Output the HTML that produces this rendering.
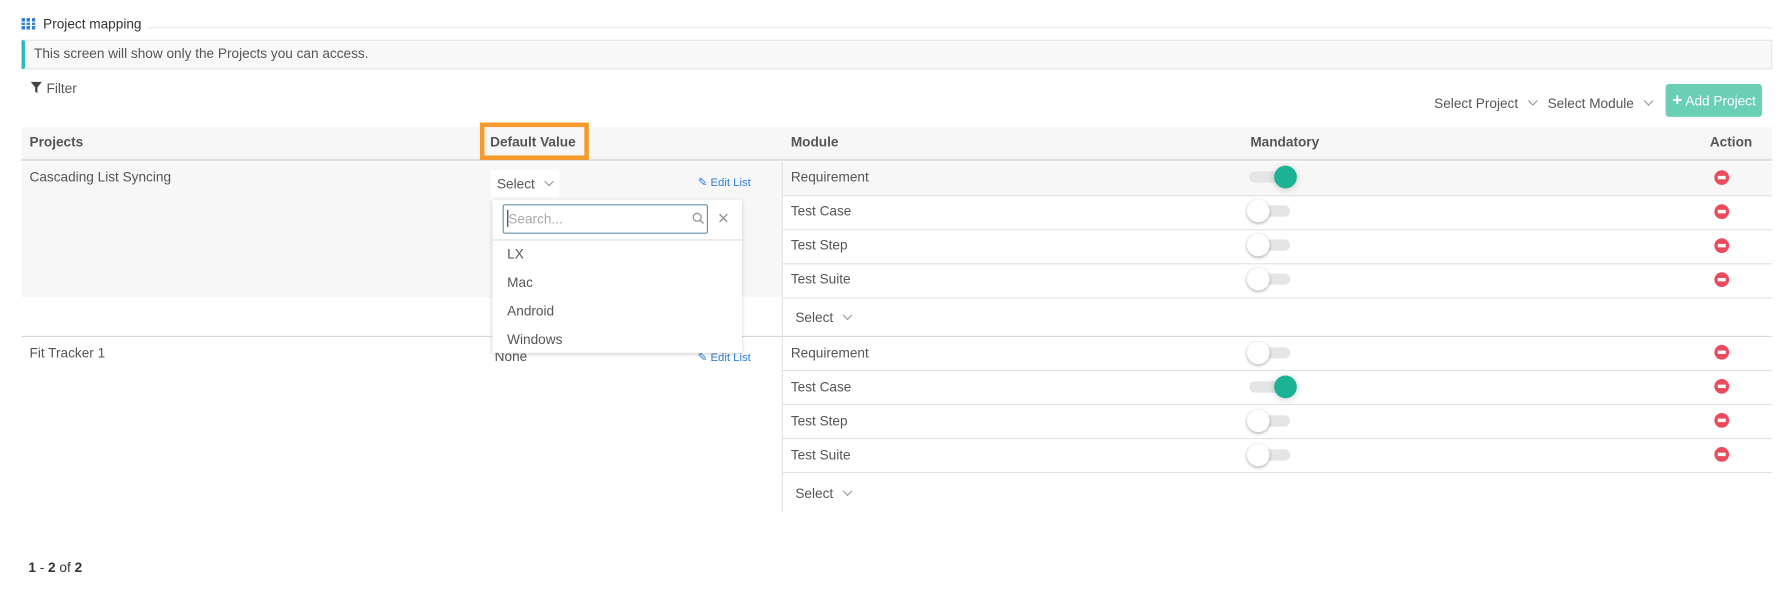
<!DOCTYPE html>
<html><head><style>
*{box-sizing:border-box;margin:0;padding:0}
html,body{width:1779px;height:602px;overflow:hidden;background:#fff}
#w{position:absolute;left:0;top:0;width:1568px;height:531px;transform:scale(1.1346);transform-origin:0 0;font-family:"Liberation Sans",sans-serif;font-size:12px;color:#555}
.a{position:absolute}
.hd{font-weight:bold;color:#555;font-size:12px}
.tog{position:absolute;width:36px;height:10px;border-radius:5px;background:#e4e5e7}
.knob{position:absolute;width:20px;height:20px;border-radius:50%;top:-5px}
.off .knob{left:-2px;background:#fff;box-shadow:0 1px 3px rgba(0,0,0,.35)}
.on .knob{left:22px;background:#1bb394;box-shadow:0 1px 6px rgba(0,0,0,.2)}
.del{position:absolute;width:13px;height:13px;border-radius:50%;background:#ea4c5d}
.del:after{content:"";position:absolute;left:3px;top:5px;width:7px;height:3px;background:#fff}
.hl{position:absolute;height:1px;background:#e2e2e2}
.chev{display:inline-block;width:6px;height:6px;border-right:1px solid #999;border-bottom:1px solid #999;transform:rotate(45deg);margin-left:10px;position:relative;top:-3px}
</style></head><body><div id="w">
<div class="a" style="left:19px;top:16px;width:12px;height:10px;background:
linear-gradient(90deg,#2a7fd4 3px,transparent 3px,transparent 4.5px,#2a7fd4 4.5px,#2a7fd4 7.5px,transparent 7.5px,transparent 9px,#2a7fd4 9px);"></div>
<div class="a" style="left:19px;top:18.5px;width:12px;height:1.2px;background:#fff"></div>
<div class="a" style="left:19px;top:21.8px;width:12px;height:1.2px;background:#fff"></div>
<div class="a" style="left:38px;top:14px;color:#333;font-size:12px">Project mapping</div>
<div class="hl" style="left:130px;top:24px;width:1432px;background:#e8e8e8"></div>
<div class="a" style="left:19px;top:35px;width:1543px;height:26px;background:#f8f8f8;border:1px solid #e6e6e6;border-left:3px solid #2bb8c4"></div>
<div class="a" style="left:30px;top:40px;color:#555">This screen will show only the Projects you can access.</div>
<svg class="a" style="left:27px;top:72px" width="10" height="10" viewBox="0 0 10 10"><path d="M0 0H10L6 5V10L4 9V5Z" fill="#444"/></svg>
<div class="a" style="left:41px;top:71px">Filter</div>
<div class="a" style="left:1264px;top:84px">Select Project<span class="chev"></span></div>
<div class="a" style="left:1364px;top:84px">Select Module<span class="chev"></span></div>
<div class="a" style="left:1468px;top:74px;width:85px;height:29px;background:#6acfb5;border-radius:3px;color:#fff;font-size:12px;line-height:29px;padding-left:6px"><b style="font-size:15px">+</b> Add Project</div>
<div class="a" style="left:19px;top:112px;width:1543px;height:30px;background:#f7f7f7;border-bottom:2px solid #e0e0e0"></div>
<div class="a hd" style="left:26px;top:118px">Projects</div>
<div class="a" style="left:423px;top:108px;width:96px;height:33px;border:4px solid #f59a2c"></div>
<div class="a hd" style="left:432px;top:118px">Default Value</div>
<div class="a hd" style="left:697px;top:118px">Module</div>
<div class="a hd" style="left:1102px;top:118px">Mandatory</div>
<div class="a hd" style="left:1507px;top:118px">Action</div>
<div class="a" style="left:19px;top:143px;width:670px;height:119px;background:#f7f7f7"></div>
<div class="a" style="left:690px;top:143px;width:872px;height:29px;background:#f7f7f7"></div>
<div class="a" style="left:689px;top:143px;width:1px;height:308px;background:#e2e2e2"></div>
<div class="a" style="left:26px;top:149px">Cascading List Syncing</div>
<div class="a" style="left:433px;top:150px;width:60px;height:24px;background:#fff"></div>
<div class="a" style="left:438px;top:155px">Select<span class="chev"></span></div>
<div class="a" style="left:615px;top:156px;color:#2a7fd4;font-size:10px">✎ Edit List</div>
<div class="hl" style="left:690px;top:172px;width:872px"></div>
<div class="hl" style="left:690px;top:202px;width:872px"></div>
<div class="hl" style="left:690px;top:232px;width:872px"></div>
<div class="hl" style="left:690px;top:262px;width:872px"></div>
<div class="a" style="left:697px;top:149px">Requirement</div>
<div class="a" style="left:697px;top:179px">Test Case</div>
<div class="a" style="left:697px;top:209px">Test Step</div>
<div class="a" style="left:697px;top:239px">Test Suite</div>
<div class="a" style="left:701px;top:273px">Select<span class="chev"></span></div>
<div class="tog on" style="left:1101px;top:151px"><div class="knob"></div></div>
<div class="tog off" style="left:1101px;top:181px"><div class="knob"></div></div>
<div class="tog off" style="left:1101px;top:211px"><div class="knob"></div></div>
<div class="tog off" style="left:1101px;top:241px"><div class="knob"></div></div>
<div class="del" style="left:1511px;top:150px"></div>
<div class="del" style="left:1511px;top:180px"></div>
<div class="del" style="left:1511px;top:210px"></div>
<div class="del" style="left:1511px;top:240px"></div>
<div class="a" style="left:19px;top:296px;width:1543px;height:1px;background:#d8d8d8"></div>
<div class="a" style="left:26px;top:304px">Fit Tracker 1</div>
<div class="a" style="left:436px;top:307px">None</div>
<div class="a" style="left:615px;top:310px;color:#2a7fd4;font-size:10px">✎ Edit List</div>
<div class="hl" style="left:690px;top:326px;width:872px"></div>
<div class="hl" style="left:690px;top:356px;width:872px"></div>
<div class="hl" style="left:690px;top:386px;width:872px"></div>
<div class="hl" style="left:690px;top:416px;width:872px"></div>
<div class="a" style="left:697px;top:304px">Requirement</div>
<div class="a" style="left:697px;top:334px">Test Case</div>
<div class="a" style="left:697px;top:364px">Test Step</div>
<div class="a" style="left:697px;top:394px">Test Suite</div>
<div class="a" style="left:701px;top:428px">Select<span class="chev"></span></div>
<div class="tog off" style="left:1101px;top:306px"><div class="knob"></div></div>
<div class="tog on" style="left:1101px;top:336px"><div class="knob"></div></div>
<div class="tog off" style="left:1101px;top:366px"><div class="knob"></div></div>
<div class="tog off" style="left:1101px;top:396px"><div class="knob"></div></div>
<div class="del" style="left:1511px;top:304px"></div>
<div class="del" style="left:1511px;top:334px"></div>
<div class="del" style="left:1511px;top:364px"></div>
<div class="del" style="left:1511px;top:394px"></div>
<div class="a" style="left:434px;top:176px;width:220px;height:135px;background:#fff;box-shadow:0 1px 4px rgba(0,0,0,.2)"></div>
<div class="a" style="left:443px;top:180px;width:181px;height:26px;border:1px solid #6a8fa8;border-radius:2px;background:#fff"></div>
<div class="a" style="left:448px;top:186px;color:#aaa">Search...</div>
<div class="a" style="left:447px;top:185px;width:1px;height:15px;background:#333"></div>
<svg class="a" style="left:610px;top:187px" width="11" height="11" viewBox="0 0 11 11"><circle cx="4.5" cy="4.5" r="3.5" fill="none" stroke="#999" stroke-width="1.2"/><path d="M7 7L10 10" stroke="#999" stroke-width="1.2"/></svg>
<div class="a" style="left:632px;top:185px;color:#999;font-size:13px">✕</div>
<div class="hl" style="left:434px;top:211px;width:220px;background:#ddd"></div>
<div class="a" style="left:447px;top:217px">LX</div>
<div class="a" style="left:447px;top:242px">Mac</div>
<div class="a" style="left:447px;top:267px">Android</div>
<div class="a" style="left:447px;top:292px">Windows</div>
<div class="a" style="left:25px;top:493px;color:#333;font-size:12px"><b>1</b> - <b>2</b> of <b>2</b></div>
</div></body></html>
